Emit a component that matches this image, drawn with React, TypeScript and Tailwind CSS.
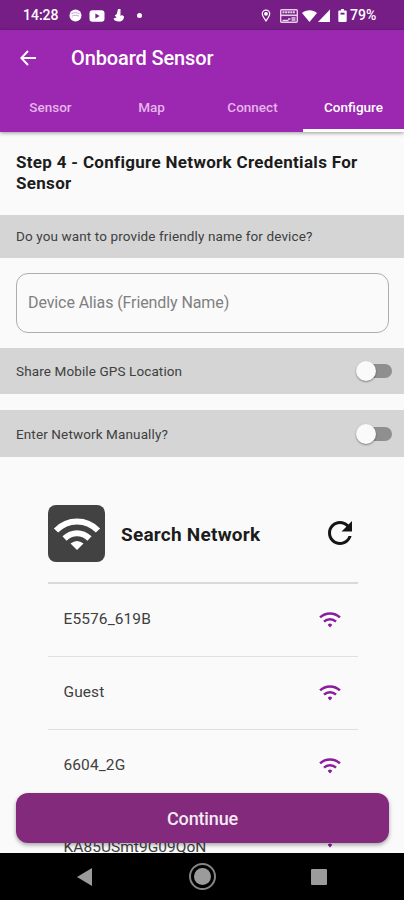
import { useState } from 'react';

const tabs = ['Sensor', 'Map', 'Connect', 'Configure'];

const networks = ['E5576_619B', 'Guest', '6604_2G'];

function WifiIcon() {
   return (
      <svg viewBox="0 0 22 16" className="h-4 w-[22px] text-[#8a1c9d]" fill="none" stroke="currentColor">
         <path d="M1.1 5.4C6.6 .1 15.4 .1 20.9 5.4" strokeWidth="2.5" />
         <path d="M5 9.7C8.3 6.5 13.7 6.5 17 9.7" strokeWidth="2.5" />
         <path d="M9 12.4q2-1.600 4 0q.3.500-.2 1.200L11 15.600 9.200 13.600q-.5-.7-.2-1.200z" fill="currentColor" stroke="none" />
      </svg>
   );
}

function StatusBar() {
   return (
      <div className="flex h-[30px] shrink-0 items-center bg-[#761e86] pt-px pl-[23px] text-white">
         <span className="w-[46px] text-[14px] font-medium">14:28</span>
         <svg viewBox="0 0 13 13" className="h-[13px] w-[13px]">
            <circle cx="6.5" cy="6.5" r="6" fill="#fff" />
            <path d="M2.5 4.800C5 3.300 8 3.300 10.5 4.800M3 7.200c2-1.200 5-1.200 7 0" fill="none" stroke="#c9a0d0" strokeWidth="1" />
         </svg>
         <svg viewBox="0 0 16 12" className="ml-[7px] h-3 w-4">
            <rect x=".5" y=".3" width="15" height="11.4" rx="3" fill="#fff" />
            <path d="M6.4 3.5v5l4.2-2.5z" fill="#761e86" />
         </svg>
         <svg viewBox="0 0 12 13" className="ml-[8px] h-[13px] w-3" fill="#fff">
            <path d="M5 0h2.500v7l1.500-1 2 1.500C11 10.500 9 12.500 6 12.500 3 12.500.8 11.500.5 9.500L3.500 8.500 1.800 6.500 3.800 5z" />
         </svg>
         <span className="ml-[12px] h-[5px] w-[5px] rounded-full bg-white" />
         <svg viewBox="0 0 10 14" className="ml-[119px] h-[13px] w-[10px]" fill="none" stroke="#fff" strokeWidth="1.3">
            <path d="M5 12.8C2.8 9.8 1 7.6 1 5.2a4 4 0 0 1 8 0c0 2.4-1.8 4.6-4 7.6z" />
            <circle cx="5" cy="5.2" r="1.4" fill="#fff" />
         </svg>
         <svg viewBox="0 0 18 14" className="ml-[9px] h-[14px] w-[18px]" fill="none" stroke="#e6cfe9">
            <rect x=".7" y=".7" width="16.6" height="12.6" rx="1" strokeWidth="1.4" />
            <path d="M2.500 3.200h13" strokeWidth="2" strokeDasharray="2 .6" />
            <path d="M1 6.300h16" strokeWidth="1.6" />
            <path d="M8 10h2.500M11.500 9h4M11.500 11h4M2.500 11.500h6" strokeWidth="1.4" />
         </svg>
         <svg viewBox="0 0 15 12" className="ml-[4px] h-3 w-[15px]">
            <path d="M0 3C4.3-.8 10.7-.8 15 3L7.5 12z" fill="#fff" />
         </svg>
         <svg viewBox="0 0 12 13" className="ml-[1px] h-[13px] w-3">
            <path d="M12 .5V13H0z" fill="#fff" />
         </svg>
         <svg viewBox="0 0 9 14" className="ml-[8px] h-[13px] w-[9px]">
            <path d="M3 0h3v1.5h2q1 0 1 1V13q0 1-1 1H1q-1 0-1-1V2.5q0-1 1-1h2z" fill="#fff" />
            <path d="M2.3 4h4.4v2H2.3z" fill="#761e86" />
         </svg>
         <span className="ml-[3px] text-[14px] font-medium">79%</span>
      </div>
   );
}

function Toggle({ on, onChange }: { on: boolean; onChange: () => void }) {
   return (
      <button
         type="button"
         role="switch"
         aria-checked={on}
         onClick={onChange}
         className={`flex h-5 w-9 items-center ${on ? 'flex-row-reverse' : ''}`}
      >
         <span className="z-[1] h-5 w-5 shrink-0 rounded-full bg-[#fafafa] shadow-[0_1px_2px_rgba(0,0,0,0.4)]" />
         <span className="-mx-2.5 h-[14px] w-[26px] shrink-0 rounded-full bg-[#8f8f8f]" />
      </button>
   );
}

export default function App() {
   const [activeTab, setActiveTab] = useState('Configure');
   const [alias, setAlias] = useState('');
   const [shareGps, setShareGps] = useState(false);
   const [manual, setManual] = useState(false);

   return (
      <div className="flex h-[900px] w-[404px] flex-col overflow-hidden bg-[#fafafa] font-['Roboto',sans-serif] text-[#404040]">
         <StatusBar />

         {/* App bar */}
         <header className="z-10 h-[102px] shrink-0 bg-[#9c27b0] text-white shadow-[0_1px_4px_rgba(0,0,0,0.4)]">
            <div className="flex h-[55px] items-center pl-5">
               <svg viewBox="0 0 16 16" className="h-4 w-4" fill="none" stroke="currentColor" strokeWidth="2">
                  <path d="M16 8H1.5M8 1 1.3 8 8 15" />
               </svg>
               <h1 className="ml-[35px] text-[20px] font-medium tracking-[-0.12px]">Onboard Sensor</h1>
            </div>
            <nav className="grid h-[47px] grid-cols-4">
               {tabs.map((tab) => (
                  <button
                     key={tab}
                     type="button"
                     onClick={() => setActiveTab(tab)}
                     className={`border-b-[3px] pt-px text-[13.5px] font-medium ${
                        tab === activeTab ? 'border-white pr-0' : 'border-transparent text-[#e6b5ec]'
                     }`}
                  >
                     {tab}
                  </button>
               ))}
            </nav>
         </header>

         <main className="relative min-h-0 flex-1 overflow-hidden">
            <h2 className="h-[83px] px-4 pt-5 text-[17px] leading-[21px] font-bold tracking-[0.31px] text-[#1c1c1c]">
               Step 4 - Configure Network Credentials For Sensor
            </h2>

            <p className="flex h-[43px] items-center bg-[#d5d5d5] px-4 text-[13.5px] tracking-[0.12px]">
               Do you want to provide friendly name for device?
            </p>

            <div className="px-4 py-[15px]">
               <input
                  type="text"
                  placeholder="Device Alias (Friendly Name)"
                  value={alias}
                  onChange={(e) => setAlias(e.target.value)}
                  className="block h-[60px] w-[373px] rounded-xl border border-[#adadad] px-[11px] pb-0.5 text-[16px] tracking-[-0.1px] placeholder:text-[#808080]"
               />
            </div>

            <div className="flex h-[46px] items-center justify-between bg-[#d5d5d5] pr-3 pl-4 text-[13.5px] tracking-[0.12px]">
               <span>Share Mobile GPS Location</span>
               <Toggle on={shareGps} onChange={() => setShareGps(!shareGps)} />
            </div>

            <div className="mt-4 flex h-[47px] items-center justify-between bg-[#d5d5d5] pt-px pr-3 pl-4 text-[13.5px] tracking-[0.12px]">
               <span>Enter Network Manually?</span>
               <Toggle on={manual} onChange={() => setManual(!manual)} />
            </div>

            {/* Network list */}
            <section className="mx-12 mt-12 w-[310px]">
               <div className="flex h-[79px] items-start border-b-2 border-[#d9d9d9]">
                  <span className="flex h-[57px] w-[57px] items-center justify-center rounded-lg bg-[#424242] text-white">
                     <svg viewBox="0 0 48 34" className="h-[34px] w-12">
                        <path d="M3 13.5C15 1.500 33 1.500 45 13.5" fill="none" stroke="#fff" strokeWidth="6" />
                        <path d="M11.500 21.500C19 14.5 29 14.5 36.500 21.500" fill="none" stroke="#fff" strokeWidth="6" />
                        <path d="M17.5 26.5Q24 21.5 30.5 26.5L24 33z" fill="#fff" />
                     </svg>
                  </span>
                  <h3 className="ml-4 pt-4 text-[19px] leading-[28px] font-bold tracking-[0.24px] text-[#1c1c1c]">Search Network</h3>
                  <button type="button" className="mt-[16px] mr-[6px] ml-auto">
                     <svg viewBox="4 4 16 16" className="h-6 w-6" fill="#151515">
                        <path d="M17.65 6.35C16.2 4.9 14.21 4 12 4c-4.42 0-7.99 3.58-7.99 8s3.57 8 7.99 8c3.73 0 6.84-2.55 7.73-6h-2.08c-.82 2.33-3.04 4-5.65 4-3.31 0-6-2.69-6-6s2.69-6 6-6c1.66 0 3.14.69 4.22 1.78L13 11h7V4l-2.35 2.35z" />
                     </svg>
                  </button>
               </div>
               {networks.map((name) => (
                  <div key={name} className="flex h-[73px] items-center justify-between border-b border-[#e0e0e0] pr-[17px] pl-[15.5px]">
                     <span className="text-[15.5px] tracking-[0.1px]">{name}</span>
                     <WifiIcon />
                  </div>
               ))}
               <div className="flex h-[73px] items-center justify-between pr-[17px] pl-[15.5px]">
                  <span className="pt-[17px] text-[15.5px] tracking-[0.03px]">KA85USmt9G09QoN</span>
                  <WifiIcon />
               </div>
            </section>

            <button
               type="button"
               className="absolute right-[15px] bottom-2.5 left-4 h-[50px] rounded-xl bg-[#832a7c] text-[18px] font-medium tracking-[-0.15px] text-[#f5e9f4] shadow-[0_2px_4px_rgba(0,0,0,0.35)]"
            >
               Continue
            </button>
         </main>

         {/* Android navigation */}
         <footer className="flex h-[47px] shrink-0 items-center bg-black pl-[77px] text-[#9b9b9b]">
            <svg viewBox="0 0 15 18" className="h-[18px] w-[15px]" fill="currentColor">
               <path d="M15 0v18L0 9z" />
            </svg>
            <span className="ml-[97px] flex h-[27px] w-[27px] items-center justify-center rounded-full border-2 border-[#858585]">
               <span className="h-[17px] w-[17px] rounded-full bg-[#9b9b9b]" />
            </span>
            <span className="ml-[95px] h-4 w-4 rounded-[1px] bg-[#9b9b9b]" />
         </footer>
      </div>
   );
}
